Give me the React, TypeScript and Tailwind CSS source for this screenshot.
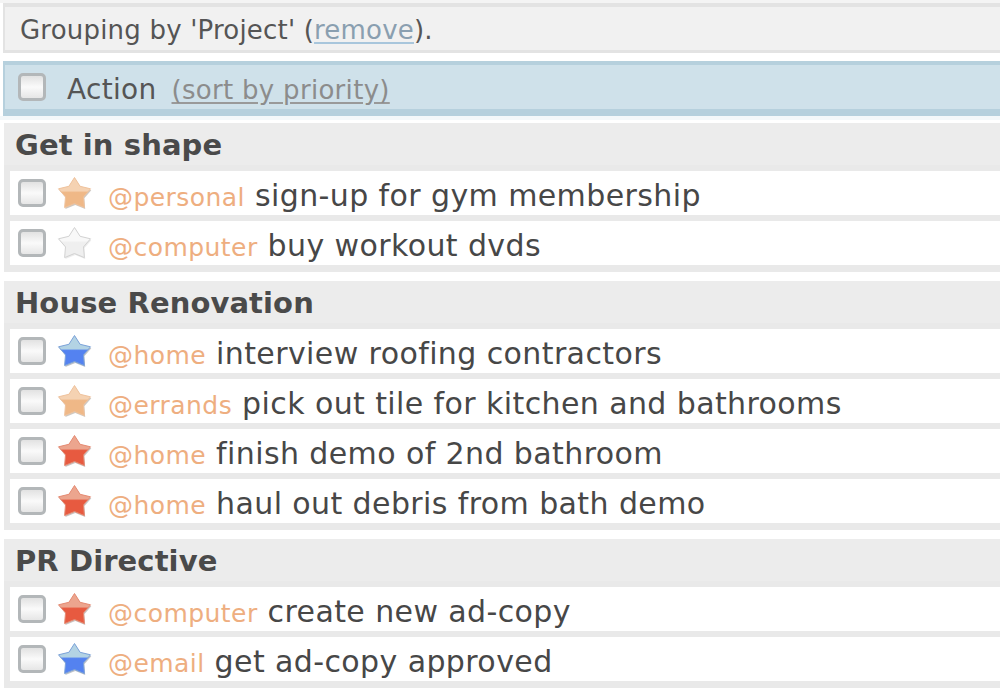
import React from "react";

type StarKind = "peach" | "gray" | "blue" | "red";

const starColors: Record<StarKind, { top: string; bottom: string; stroke: string; shadow: string }> = {
  peach: { top: "#f5d2b2", bottom: "#efb887", stroke: "#efc29c", shadow: "#b9b0a8" },
  gray: { top: "#f8f8f8", bottom: "#efefef", stroke: "#d2d2d2", shadow: "#e2e2e2" },
  blue: { top: "#b3d3e4", bottom: "#5482f0", stroke: "#7ba2d9", shadow: "#a3a8b0" },
  red: { top: "#eca58e", bottom: "#e75a40", stroke: "#e58a72", shadow: "#b2a8a6" },
};

const STAR_POINTS =
  "17.5,1.5 23.1,10.3 33.5,12.8 26.5,20.9 27.4,31.6 17.5,27.5 7.6,31.6 8.5,20.9 1.5,12.8 11.9,10.3";

function Star({ kind }: { kind: StarKind }) {
  const c = starColors[kind];
  const id = `g-${kind}`;
  return (
    <svg width="35" height="35" viewBox="0 0 35 35" className="shrink-0">
      <defs>
        <linearGradient id={id} x1="0" y1="0" x2="0" y2="1">
          <stop offset="0" stopColor={c.top} />
          <stop offset="0.44" stopColor={c.top} />
          <stop offset="0.5" stopColor={c.bottom} />
          <stop offset="1" stopColor={c.bottom} />
        </linearGradient>
      </defs>
      <polygon
        points={STAR_POINTS}
        transform="translate(0.8,1.4)"
        fill={c.shadow}
        opacity="0.7"
        strokeLinejoin="round"
      />
      <polygon
        points={STAR_POINTS}
        fill={`url(#${id})`}
        stroke={c.stroke}
        strokeWidth="1"
        strokeLinejoin="round"
      />
    </svg>
  );
}

function Checkbox() {
  return (
    <div className="shrink-0 w-[28px] h-[28px] rounded-[5px] border-[3px] border-[#b3b7b9] bg-linear-to-b from-[#e2e2e2] via-[#fafafa] to-[#e6e6e6]" />
  );
}

type Task = { star: StarKind; tag: string; text: string };

function Row({ task }: { task: Task }) {
  return (
    <div className="h-[44px] bg-white flex items-center">
      <div className="ml-[8px]">
        <Checkbox />
      </div>
      <div className="ml-[11px]">
        <Star kind={task.star} />
      </div>
      <span className="ml-[16px] pt-[5px] whitespace-nowrap leading-normal">
        <span className="text-[25px] tracking-[0.45px] text-[#eeae80]">{task.tag}</span>
        <span className="text-[30px] tracking-[0.4px] text-[#474747]"> {task.text}</span>
      </span>
    </div>
  );
}

function Group({ title, tasks }: { title: string; tasks: Task[] }) {
  return (
    <div className="ml-[4px] bg-[#ececec]">
      <div className="h-[42px] flex items-center pl-[11px] pt-[4px] text-[29px] font-bold tracking-[0.1px] text-[#4a4a4a] whitespace-nowrap">
        {title}
      </div>
      <div className="pl-[6px] pt-[6px] pb-[7px] flex flex-col gap-[6px] bg-[#e9e9e9]">
        {tasks.map((t, i) => (
          <Row key={i} task={t} />
        ))}
      </div>
    </div>
  );
}

const groups: { title: string; tasks: Task[] }[] = [
  {
    title: "Get in shape",
    tasks: [
      { star: "peach", tag: "@personal", text: "sign-up for gym membership" },
      { star: "gray", tag: "@computer", text: "buy workout dvds" },
    ],
  },
  {
    title: "House Renovation",
    tasks: [
      { star: "blue", tag: "@home", text: "interview roofing contractors" },
      { star: "peach", tag: "@errands", text: "pick out tile for kitchen and bathrooms" },
      { star: "red", tag: "@home", text: "finish demo of 2nd bathroom" },
      { star: "red", tag: "@home", text: "haul out debris from bath demo" },
    ],
  },
  {
    title: "PR Directive",
    tasks: [
      { star: "red", tag: "@computer", text: "create new ad-copy" },
      { star: "blue", tag: "@email", text: "get ad-copy approved" },
    ],
  },
];

export default function App() {
  return (
    <div className="w-[1000px] h-[690px] overflow-hidden bg-white font-['DejaVu_Sans',sans-serif]">
      <div className="h-[3px] bg-[#f4f4f4]" />
      <div className="ml-[3px] h-[50px] border-t-[4px] border-b-[3px] border-l-[2px] border-[#e3e3e3] bg-[#f1f1f1] flex items-center pl-[15px] pt-[3px] text-[26px] tracking-[0.2px] text-[#555] whitespace-nowrap">
        <span>
          Grouping by 'Project' (
          <span className="text-[#8a9fb0] underline decoration-[#a8c6dc] underline-offset-[3px]">remove</span>
          ).
        </span>
      </div>
      <div className="h-[8px] bg-white" />
      <div className="ml-[3px] h-[55px] border-t-[4px] border-b-[7px] border-l-[2px] border-[#b6d0dd] bg-[#cfe1ea] flex items-center">
        <div className="ml-[13px]">
          <Checkbox />
        </div>
        <span className="ml-[21px] pt-[6px] whitespace-nowrap leading-normal">
          <span className="text-[28px] tracking-[0.3px] text-[#555]">Action</span>
          <span className="ml-[15px] text-[26px] tracking-[0.3px] text-[#8c8c8c] underline decoration-[#999] underline-offset-[3px]">
            (sort by priority)
          </span>
        </span>
      </div>
      <div className="h-[4px] bg-[#f4f8fa]" />
      <div className="h-[3px] bg-white" />
      <div className="flex flex-col gap-[9px]">
        {groups.map((g, i) => (
          <Group key={i} title={g.title} tasks={g.tasks} />
        ))}
      </div>
    </div>
  );
}
